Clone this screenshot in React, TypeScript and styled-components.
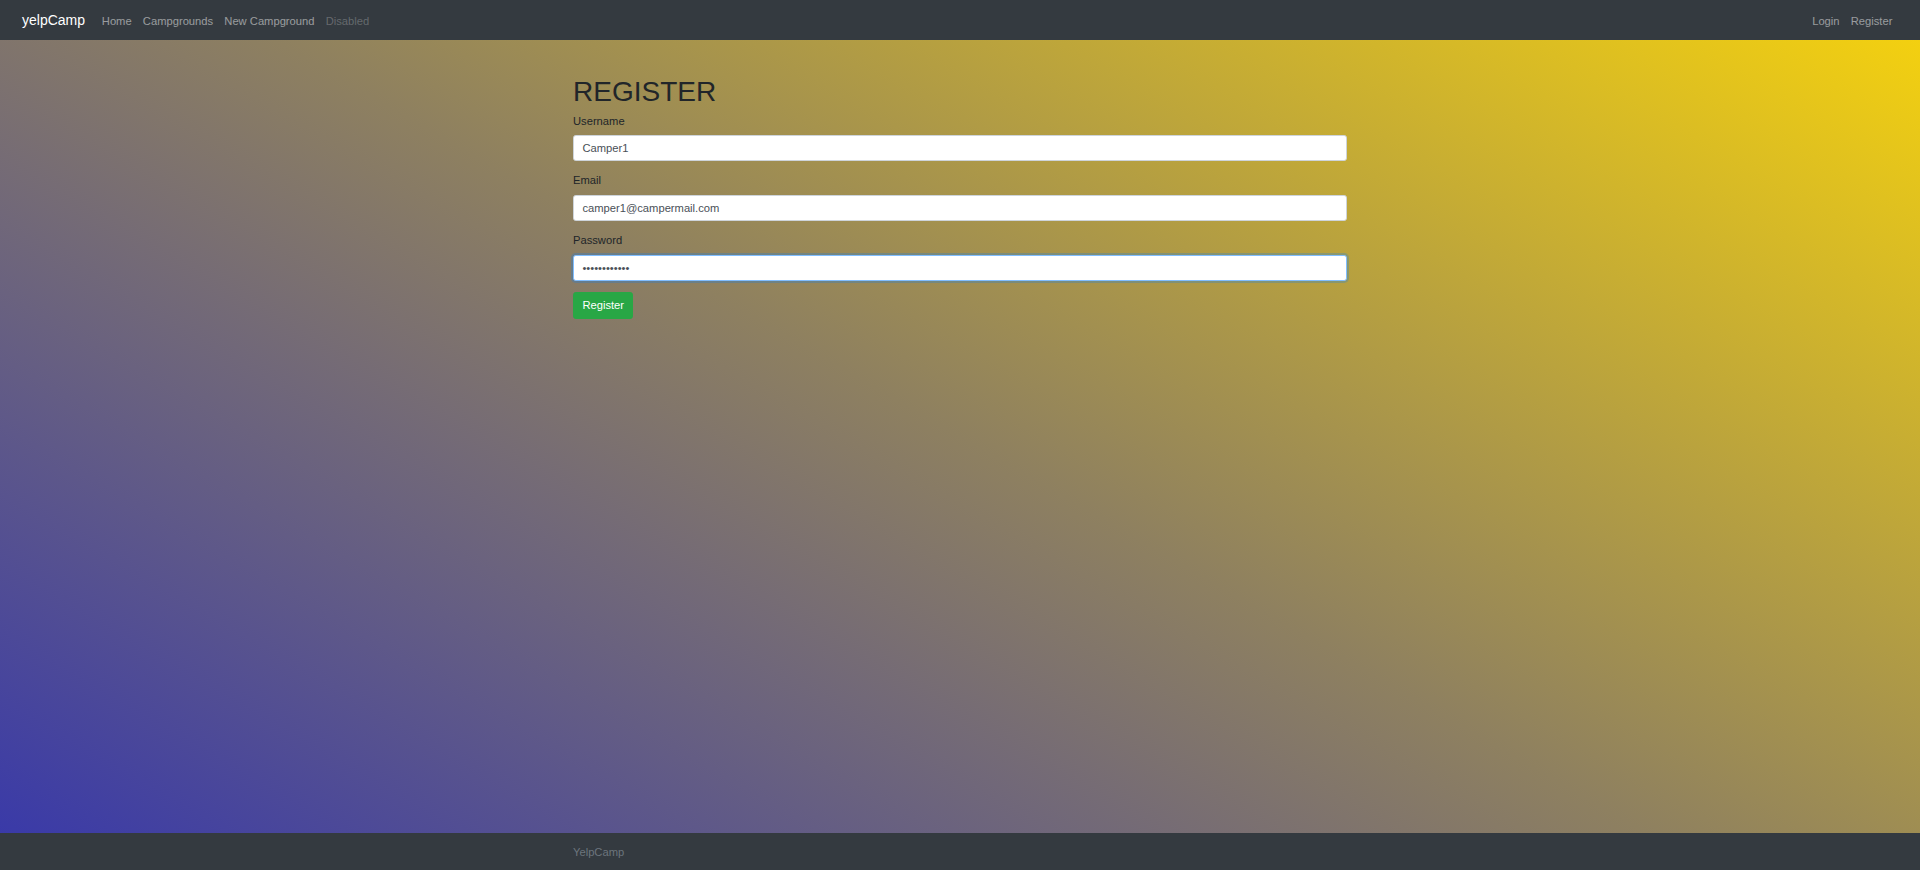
import React from "react";
import styled, { createGlobalStyle } from "styled-components";

const GlobalStyle = createGlobalStyle`
  *, *::before, *::after { box-sizing: border-box; }
  html, body { margin: 0; padding: 0; height: 100%; }
  body {
    font-family: "Liberation Sans", Arial, Helvetica, sans-serif;
    font-size: 11.2px;
    line-height: 1.5;
    color: #212529;
    background: #343a40;
  }
  #root { min-height: 100vh; }
`;

const Page = styled.div`
  min-height: 100vh;
  display: flex;
  flex-direction: column;
`;

const Navbar = styled.nav`
  height: 40px;
  flex: 0 0 auto;
  display: flex;
  align-items: center;
  justify-content: space-between;
  padding: 2px 22px 0;
  background: #343a40;
`;

const NavGroup = styled.div`
  display: flex;
  align-items: center;
`;

const Brand = styled.a`
  font-size: 14px;
  line-height: 1.5;
  color: #fff;
  text-decoration: none;
  margin-right: 11.2px;
`;

const NavLink = styled.a<{ $disabled?: boolean }>`
  font-size: 11.2px;
  line-height: 1.5;
  padding: 5.6px 5.6px;
  text-decoration: none;
  color: ${(p) => (p.$disabled ? "rgba(255,255,255,0.25)" : "rgba(255,255,255,0.5)")};
  cursor: ${(p) => (p.$disabled ? "default" : "pointer")};
`;

const Main = styled.main`
  flex: 1 1 auto;
  background: linear-gradient(30deg, #3a3aa8 0%, #8e8060 50%, #f3d010 100%);
`;

const Container = styled.div`
  width: 774px;
  margin: 0 auto;
`;

const Heading = styled.h1`
  margin: 34.6px 0 4.4px;
  font-size: 28px;
  font-weight: 500;
  line-height: 1.2;
  color: #212529;
`;

const FormGroup = styled.div`
  margin-bottom: 11.2px;
`;

const Label = styled.label`
  display: inline-block;
  margin-bottom: 5.6px;
  font-size: 11.2px;
  line-height: 1.5;
  color: #212529;
`;

const Input = styled.input<{ $focused?: boolean }>`
  display: block;
  width: 100%;
  height: 26.2px;
  padding: 4.2px 8.4px;
  font-family: "Liberation Sans", Arial, Helvetica, sans-serif;
  font-size: 11.2px;
  line-height: 1.5;
  color: #495057;
  background: #fff;
  border: 1px solid ${(p) => (p.$focused ? "#80bdff" : "#ced4da")};
  border-radius: 2.8px;
  outline: 0;
  box-shadow: ${(p) => (p.$focused ? "0 0 0 2px rgba(0,123,255,0.25)" : "none")};
  &:focus {
    border-color: #80bdff;
    box-shadow: 0 0 0 2px rgba(0,123,255,0.25);
  }
`;

const Button = styled.button`
  display: inline-block;
  height: 27px;
  padding: 0 8.4px;
  font-family: "Liberation Sans", Arial, Helvetica, sans-serif;
  font-size: 11.2px;
  line-height: 1.5;
  color: #fff;
  background: #28a745;
  border: 1px solid #28a745;
  border-radius: 2.8px;
  cursor: pointer;
`;

const Footer = styled.footer`
  flex: 0 0 auto;
  height: 37.3px;
  display: flex;
  align-items: center;
  padding-top: 2px;
  background: #343a40;
`;

const FooterText = styled.span`
  font-size: 11.2px;
  line-height: 1.5;
  color: #6c757d;
`;

export default function App() {
  return (
    <>
      <GlobalStyle />
      <Page>
        <Navbar>
          <NavGroup>
            <Brand href="#">yelpCamp</Brand>
            <NavLink href="#">Home</NavLink>
            <NavLink href="#">Campgrounds</NavLink>
            <NavLink href="#">New Campground</NavLink>
            <NavLink $disabled>Disabled</NavLink>
          </NavGroup>
          <NavGroup>
            <NavLink href="#">Login</NavLink>
            <NavLink href="#">Register</NavLink>
          </NavGroup>
        </Navbar>
        <Main>
          <Container>
            <Heading>REGISTER</Heading>
            <form onSubmit={(e) => e.preventDefault()}>
              <FormGroup>
                <Label htmlFor="username">Username</Label>
                <Input id="username" type="text" defaultValue="Camper1" />
              </FormGroup>
              <FormGroup>
                <Label htmlFor="email">Email</Label>
                <Input id="email" type="email" defaultValue="camper1@campermail.com" />
              </FormGroup>
              <FormGroup>
                <Label htmlFor="password">Password</Label>
                <Input id="password" type="password" defaultValue="camperpass12" $focused autoFocus />
              </FormGroup>
              <Button type="submit">Register</Button>
            </form>
          </Container>
        </Main>
        <Footer>
          <Container>
            <FooterText>YelpCamp</FooterText>
          </Container>
        </Footer>
      </Page>
    </>
  );
}
